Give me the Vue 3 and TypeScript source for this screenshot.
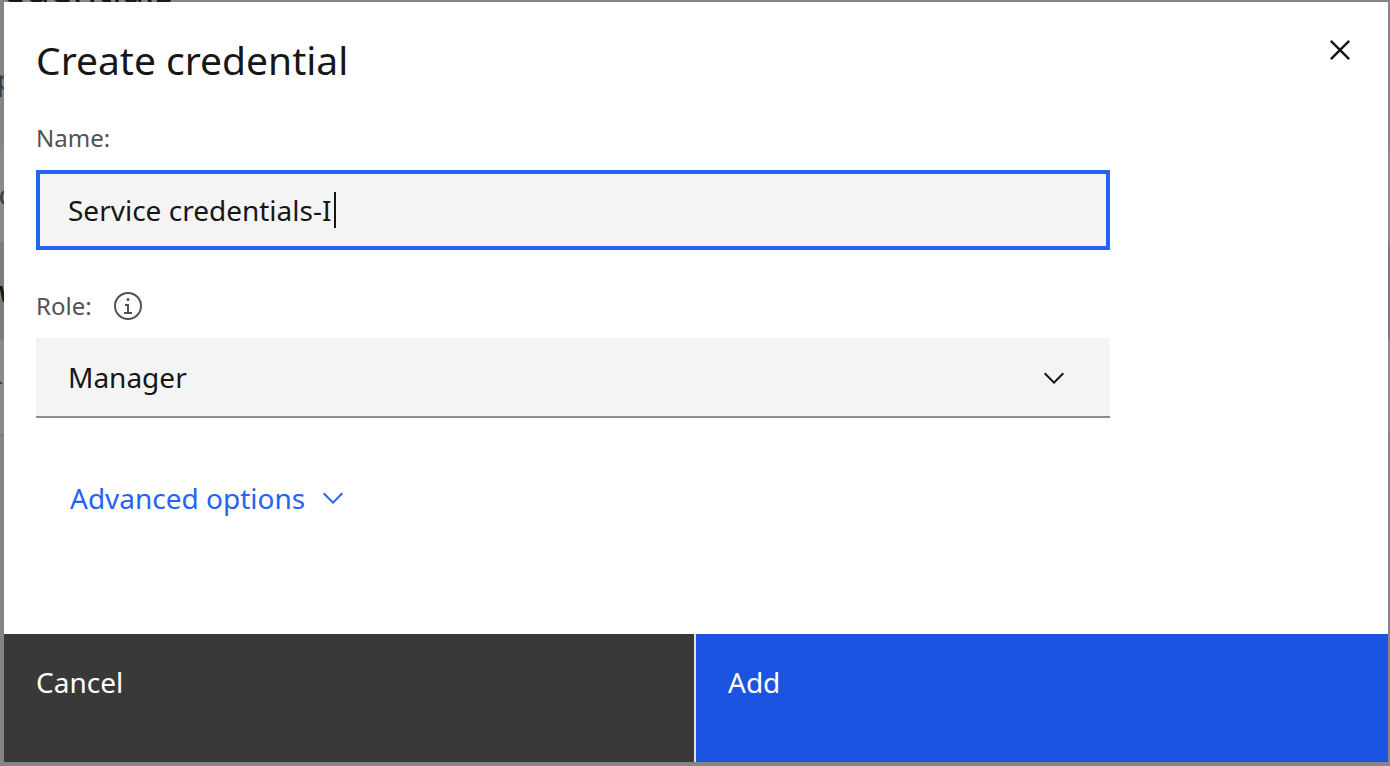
<script setup lang="ts">
import { ref } from 'vue'

const name = ref('Service credentials-I')
const role = ref('Manager')
const roles = ['Manager', 'Writer', 'Reader']
</script>

<template>
  <div class="page">
    <div class="backdrop" aria-hidden="true">
      <div class="strip heading"><span>Service credentials</span></div>
      <div class="strip intro"><span>p</span></div>
      <div class="strip row search"><span>c</span></div>
      <div class="strip row head"><span>w</span></div>
      <div class="strip row item"><span>-</span></div>
    </div>

    <form class="modal" role="dialog" aria-labelledby="title" @submit.prevent>
      <header class="top">
        <h1 id="title">Create credential</h1>
        <button type="button" class="close" aria-label="Close">
          <svg viewBox="0 0 32 32" width="40" height="40">
            <path d="M24 9.4 22.6 8 16 14.6 9.4 8 8 9.4 14.6 16 8 22.6 9.4 24 16 17.4 22.6 24 24 22.6 17.4 16Z" />
          </svg>
        </button>
      </header>

      <div class="fields">
        <label class="label" for="name">Name:</label>
        <div class="control">
          <input id="name" v-model="name" class="box" type="text" autocomplete="off" />
          <span class="caret"></span>
        </div>

        <div class="label role">
          <label for="role">Role:</label>
          <button type="button" class="info" aria-label="About roles">
            <svg viewBox="0 0 32 32" width="32" height="32">
              <path d="M17 22v-8h-4v2h2v6h-3v2h8v-2ZM16 8a1.5 1.5 0 1 0 1.5 1.5A1.5 1.5 0 0 0 16 8Z" />
              <path d="M16 30a14 14 0 1 1 14-14 14 14 0 0 1-14 14Zm0-26a12 12 0 1 0 12 12A12 12 0 0 0 16 4Z" />
            </svg>
          </button>
        </div>
        <div class="control">
          <select id="role" v-model="role" class="box">
            <option v-for="r in roles" :key="r">{{ r }}</option>
          </select>
          <svg class="arrow" viewBox="0 0 16 16" width="32" height="32">
            <path d="M8 11 3 6l.7-.7L8 9.6l4.3-4.3.7.7Z" />
          </svg>
        </div>

        <button type="button" class="advanced">
          Advanced options
          <svg viewBox="0 0 16 16" width="32" height="32">
            <path d="M8 11 3 6l.7-.7L8 9.6l4.3-4.3.7.7Z" />
          </svg>
        </button>
      </div>

      <footer class="actions">
        <button type="button" class="cancel">Cancel</button>
        <button type="submit" class="add">Add</button>
      </footer>
    </form>
  </div>
</template>

<style>
body {
  margin: 0;
}
</style>

<style scoped>
.page {
  position: relative;
  display: flex;
  box-sizing: border-box;
  min-height: 100vh;
  padding: 2px 2px 4px 4px;
  overflow: hidden;
  background: #858585;
  color: #161616;
  font-family: "Noto Sans", "Open Sans", sans-serif;
  font-size: 28px;
}

.backdrop {
  position: absolute;
  inset: 0;
  display: flex;
  flex-direction: column;
  color: #3c3c3c;
}

.strip {
  display: flex;
  align-items: center;
  box-sizing: border-box;
}

.strip span {
  display: flex;
  justify-content: flex-end;
  width: 12px;
}

.heading {
  height: 40px;
  align-items: flex-start;
  color: #161616;
  font-size: 40px;
  line-height: 40px;
}

.strip.heading span {
  width: 174px;
  margin-top: -32px;
  white-space: nowrap;
}

.intro {
  height: 106px;
  padding-bottom: 28px;
}

.strip.intro span {
  width: 14px;
}

.row {
  height: 96px;
  background: #8b8a89;
}

.row.head {
  height: 98px;
  background: #7e7d7c;
  color: #161616;
  font-weight: 700;
}

.row.item {
  padding-bottom: 16px;
  border-bottom: 2px solid #7e7e7e;
}

.row.item span {
  width: 3px;
}

.modal {
  position: relative;
  display: flex;
  flex: 1;
  flex-direction: column;
  min-width: 0;
  background: #fff;
}

button {
  padding: 0;
  border: 0;
  background: none;
  color: inherit;
  font: inherit;
  text-align: left;
  cursor: pointer;
}

svg {
  display: block;
  fill: currentColor;
}

.top {
  display: flex;
  justify-content: space-between;
  align-items: flex-start;
  padding: 28px 28px 0 32px;
}

h1 {
  margin: 2px 0;
  font-size: 39px;
  font-weight: 400;
  line-height: 56px;
}

.close {
  color: #161616;
}

.fields {
  display: flex;
  flex: 1;
  flex-direction: column;
  width: 77.6%;
  margin-left: 32px;
}

.label {
  margin-top: 32px;
  margin-bottom: 16px;
  color: #525252;
  font-size: 24px;
  line-height: 32px;
}

.role {
  display: flex;
  align-items: center;
  gap: 20px;
  margin-top: 40px;
}

.control {
  position: relative;
}

.box {
  display: block;
  box-sizing: border-box;
  width: 100%;
  height: 80px;
  margin: 0;
  padding: 0 32px;
  border: 0;
  border-radius: 0;
  outline: none;
  appearance: none;
  background: #f4f4f4;
  color: #161616;
  font: inherit;
}

input.box {
  padding: 0 28px;
  border: 4px solid #2563f5;
}

select.box {
  border-bottom: 2px solid #8d8d8d;
}

.caret {
  position: absolute;
  top: 22px;
  left: 298px;
  width: 2px;
  height: 36px;
  background: #161616;
}

.arrow {
  position: absolute;
  top: 24px;
  right: 40px;
  pointer-events: none;
}

.advanced {
  display: flex;
  align-items: center;
  align-self: flex-start;
  gap: 12px;
  margin: 60px 0 64px 34px;
  color: #2563f5;
  line-height: 40px;
}

.actions {
  display: grid;
  grid-template-columns: 1fr 1fr;
  height: 128px;
  color: #fff;
}

.actions button {
  padding: 28px 32px 60px;
  line-height: 40px;
}

.cancel {
  border-right: 2px solid #e0e0e0;
  background: #393939;
}

.actions .add {
  background: #1b54e0;
}
</style>
